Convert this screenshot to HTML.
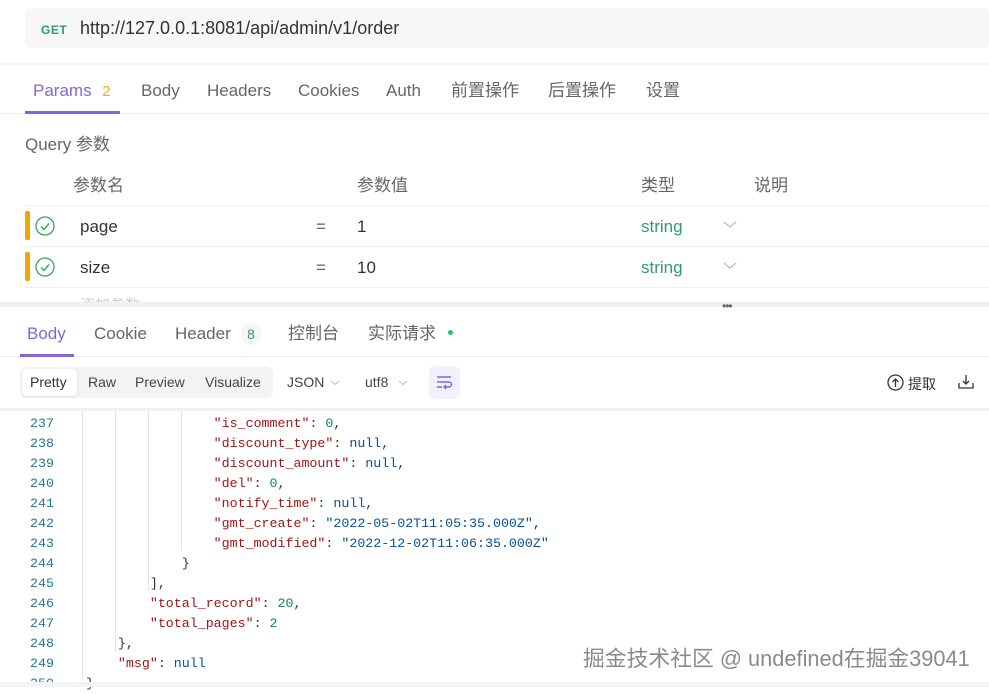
<!DOCTYPE html>
<html><head><meta charset="utf-8"><style>
*{margin:0;padding:0;box-sizing:border-box}
body{width:989px;height:687px;overflow:hidden;background:#fff;font-family:"Liberation Sans","Noto Sans CJK SC",sans-serif;position:relative;color:#555}
.a{position:absolute;white-space:nowrap}
.t{font-size:17px;color:#666;top:80px;line-height:22px}
.h{font-size:17px;color:#666;line-height:22px}
.hl{position:absolute;left:25px;right:0;height:1px;background:#eee}
.code{position:absolute;left:22px;top:414px;width:967px;font-family:"Liberation Mono",monospace;font-size:13.3px;line-height:20px}
.ln{position:absolute;left:8px;width:40px;color:#237893}
.cl{position:absolute;left:64px;white-space:pre;color:#333}
.k{color:#a31515}.n{color:#0451a5}.d{color:#098658}
.g{position:absolute;top:-3px;width:1px;background:#e4e4e4}
</style></head><body>
<div class="a" style="left:25px;top:8px;width:964px;height:40px;background:#f7f7f8;border-radius:6px"></div>
<div class="a" style="left:41px;top:23px;font-size:12px;font-weight:bold;color:#2e9d6b;letter-spacing:0.5px">GET</div>
<div class="a" style="left:80px;top:18px;font-size:18px;color:#333">http://127.0.0.1:8081/api/admin/v1/order</div>
<div class="a" style="left:0;top:63px;width:989px;height:2px;background:#f3f3f3"></div>

<div class="a t" style="left:33px;color:#8566d6">Params <span style="color:#f5a623;margin-left:6px;font-size:15px">2</span></div>
<div class="a t" style="left:141px">Body</div>
<div class="a t" style="left:207px">Headers</div>
<div class="a t" style="left:298px">Cookies</div>
<div class="a t" style="left:386px">Auth</div>
<div class="a t" style="left:451px">前置操作</div>
<div class="a t" style="left:548px">后置操作</div>
<div class="a t" style="left:646px">设置</div>
<div class="hl" style="top:113px;left:0"></div>
<div class="a" style="left:25px;top:111px;width:95px;height:3px;background:#8566d6"></div>

<div class="a h" style="left:25px;top:134px">Query 参数</div>
<div class="a h" style="left:73px;top:175px">参数名</div>
<div class="a h" style="left:357px;top:175px">参数值</div>
<div class="a h" style="left:641px;top:175px">类型</div>
<div class="a h" style="left:754px;top:175px">说明</div>
<div class="hl" style="top:205px"></div>
<div class="hl" style="top:246px"></div>
<div class="hl" style="top:287px"></div>

<div class="a" style="left:25px;top:211px;width:5px;height:29px;background:#f5a300;border-radius:2px"></div>
<div class="a" style="left:25px;top:252px;width:5px;height:29px;background:#f5a300;border-radius:2px"></div>
<svg class="a" style="left:35px;top:216px" width="20" height="20"><circle cx="10" cy="10" r="9" fill="none" stroke="#3ba55c" stroke-width="1.3"/><path d="M6 10.5l3 3 5-6" fill="none" stroke="#3ba55c" stroke-width="1.5"/></svg>
<svg class="a" style="left:35px;top:257px" width="20" height="20"><circle cx="10" cy="10" r="9" fill="none" stroke="#3ba55c" stroke-width="1.3"/><path d="M6 10.5l3 3 5-6" fill="none" stroke="#3ba55c" stroke-width="1.5"/></svg>
<div class="a h" style="left:80px;top:216px;color:#333">page</div>
<div class="a h" style="left:80px;top:257px;color:#333">size</div>
<div class="a h" style="left:316px;top:216px">=</div>
<div class="a h" style="left:316px;top:257px">=</div>
<div class="a h" style="left:357px;top:216px;color:#333">1</div>
<div class="a h" style="left:357px;top:257px;color:#333">10</div>
<div class="a h" style="left:641px;top:216px;color:#2e9d6b">string</div>
<div class="a h" style="left:641px;top:257px;color:#2e9d6b">string</div>
<svg class="a" style="left:723px;top:221px" width="14" height="8"><path d="M1 1l6 5 6-5" fill="none" stroke="#bbb" stroke-width="1.2"/></svg>
<svg class="a" style="left:723px;top:262px" width="14" height="8"><path d="M1 1l6 5 6-5" fill="none" stroke="#bbb" stroke-width="1.2"/></svg>
<div class="a" style="left:80px;top:294px;font-size:15px;color:#ccc;height:8px;overflow:hidden">添加参数</div>

<div class="a" style="left:0;top:302px;width:989px;height:5px;background:#f0f0f2"></div>
<div class="a" style="left:722px;top:299px;font-size:12px;color:#666;letter-spacing:-1px">•••</div>

<div class="a t" style="left:27px;top:323px;color:#8566d6">Body</div>
<div class="a t" style="left:94px;top:323px">Cookie</div>
<div class="a t" style="left:175px;top:323px">Header</div>
<div class="a" style="left:241px;top:323px;width:20px;height:22px;border-radius:10px;background:#f6f6f6;color:#2e9d6b;font-size:14px;text-align:center;line-height:22px">8</div>
<div class="a t" style="left:288px;top:323px">控制台</div>
<div class="a t" style="left:368px;top:323px">实际请求</div>
<div class="a" style="left:448px;top:330px;width:5px;height:5px;border-radius:50%;background:#2ebd6b"></div>
<div class="a" style="left:0;top:356px;width:989px;height:1px;background:#eee"></div>
<div class="a" style="left:20px;top:354px;width:54px;height:3px;background:#8566d6"></div>

<div class="a" style="left:20px;top:367px;width:253px;height:31px;background:#f3f3f5;border-radius:6px"></div>
<div class="a" style="left:22px;top:369px;width:55px;height:27px;background:#fff;border-radius:5px;box-shadow:0 1px 2px rgba(0,0,0,.08)"></div>
<div class="a" style="left:30px;top:374px;font-size:14px;color:#333">Pretty</div>
<div class="a" style="left:88px;top:374px;font-size:14px;color:#444">Raw</div>
<div class="a" style="left:135px;top:374px;font-size:14px;color:#444">Preview</div>
<div class="a" style="left:205px;top:374px;font-size:14px;color:#444">Visualize</div>
<div class="a" style="left:287px;top:374px;font-size:14px;color:#444">JSON</div>
<svg class="a" style="left:330px;top:380px" width="10" height="6"><path d="M1 1l4 3.5 4-3.5" fill="none" stroke="#bbb"/></svg>
<div class="a" style="left:365px;top:374px;font-size:14px;color:#444">utf8</div>
<svg class="a" style="left:398px;top:380px" width="10" height="6"><path d="M1 1l4 3.5 4-3.5" fill="none" stroke="#bbb"/></svg>
<div class="a" style="left:429px;top:366px;width:31px;height:33px;background:#f3f0fd;border-radius:6px"></div>
<svg class="a" style="left:436px;top:375px" width="17" height="15"><path d="M1 2h14M1 7h12a2.5 2.5 0 0 1 0 5h-4M1 12h5M10 10l-2 2 2 2" fill="none" stroke="#8566d6" stroke-width="1.4"/></svg>
<svg class="a" style="left:887px;top:374px" width="17" height="17"><circle cx="8.5" cy="8.5" r="7.5" fill="none" stroke="#333" stroke-width="1.3"/><path d="M8.5 13V5M5.5 8l3-3 3 3" fill="none" stroke="#333" stroke-width="1.3"/></svg>
<div class="a" style="left:908px;top:374px;font-size:14px;color:#333">提取</div>
<svg class="a" style="left:958px;top:374px" width="16" height="16"><path d="M1 9v5h14V9M8 1v9M5 7l3 3 3-3" fill="none" stroke="#333" stroke-width="1.3"/></svg>
<div class="a" style="left:0;top:408px;width:989px;height:3px;background:#f1f1f1"></div>

<div class="code" style="height:268px">
<div class="g" style="left:60px;height:270px"></div>
<div class="g" style="left:93px;height:240px"></div>
<div class="g" style="left:126px;height:180px"></div>
<div class="g" style="left:159px;height:140px"></div>
<div class="ln" style="top:0">237</div><div class="cl" style="top:0">                <span class="k">"is_comment"</span>: <span class="d">0</span>,</div>
<div class="ln" style="top:20px">238</div><div class="cl" style="top:20px">                <span class="k">"discount_type"</span>: <span class="n">null</span>,</div>
<div class="ln" style="top:40px">239</div><div class="cl" style="top:40px">                <span class="k">"discount_amount"</span>: <span class="n">null</span>,</div>
<div class="ln" style="top:60px">240</div><div class="cl" style="top:60px">                <span class="k">"del"</span>: <span class="d">0</span>,</div>
<div class="ln" style="top:80px">241</div><div class="cl" style="top:80px">                <span class="k">"notify_time"</span>: <span class="n">null</span>,</div>
<div class="ln" style="top:100px">242</div><div class="cl" style="top:100px">                <span class="k">"gmt_create"</span>: <span class="n">"2022-05-02T11:05:35.000Z"</span>,</div>
<div class="ln" style="top:120px">243</div><div class="cl" style="top:120px">                <span class="k">"gmt_modified"</span>: <span class="n">"2022-12-02T11:06:35.000Z"</span></div>
<div class="ln" style="top:140px">244</div><div class="cl" style="top:140px">            }</div>
<div class="ln" style="top:160px">245</div><div class="cl" style="top:160px">        ],</div>
<div class="ln" style="top:180px">246</div><div class="cl" style="top:180px">        <span class="k">"total_record"</span>: <span class="d">20</span>,</div>
<div class="ln" style="top:200px">247</div><div class="cl" style="top:200px">        <span class="k">"total_pages"</span>: <span class="d">2</span></div>
<div class="ln" style="top:220px">248</div><div class="cl" style="top:220px">    },</div>
<div class="ln" style="top:240px">249</div><div class="cl" style="top:240px">    <span class="k">"msg"</span>: <span class="n">null</span></div>
<div class="ln" style="top:260px">250</div><div class="cl" style="top:260px">}</div>
</div>
<div class="a" style="left:0;top:682px;width:989px;height:5px;background:#f4f4f4"></div>
<div class="a" style="left:583px;top:642px;font-size:21.8px;color:#8a8a8a;text-shadow:0 0 1px #fff">掘金技术社区 @ undefined在掘金39041</div>
</body></html>
